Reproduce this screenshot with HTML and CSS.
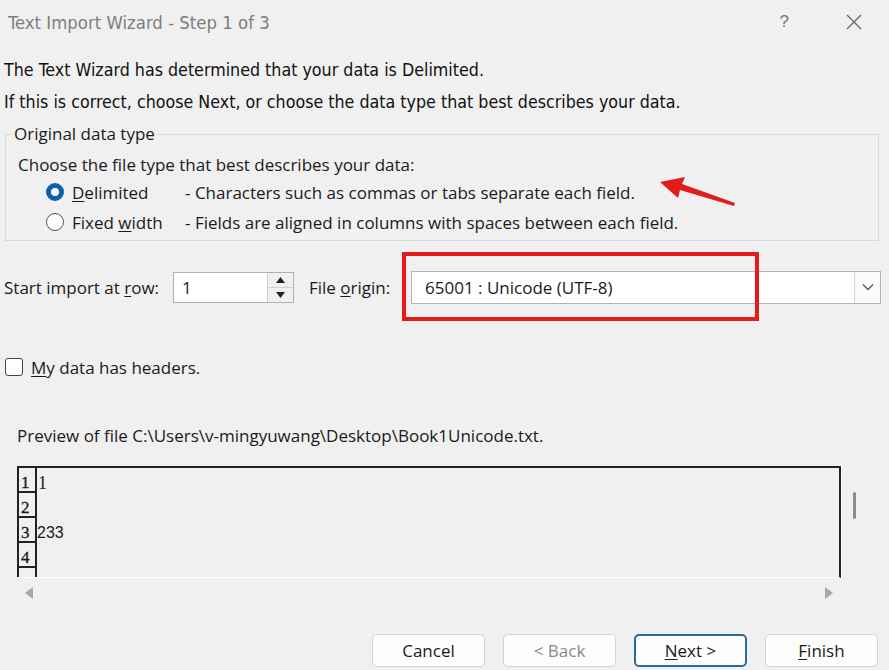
FILE: index.html
```html
<!DOCTYPE html>
<html>
<head>
<meta charset="utf-8">
<title>Text Import Wizard</title>
<link rel="stylesheet" href="styles.css">
</head>
<body>
<div class="dialog">
  <div class="titlebar">
    <span class="title">Text Import Wizard - Step 1 of 3</span>
    <span class="tb-help">?</span>
    <svg class="tb-close" width="16" height="16" viewBox="0 0 16 16"><path d="M1 1 L15 15 M15 1 L1 15" stroke="#666" stroke-width="1.3" fill="none"/></svg>
  </div>

  <div class="intro">
    <div class="intro-line">The Text Wizard has determined that your data is Delimited.</div>
    <div class="intro-line">If this is correct, choose Next, or choose the data type that best describes your data.</div>
  </div>

  <fieldset class="group">
    <legend>Original data type</legend>
    <div class="group-body">
      <div class="choose">Choose the file type that best describes your data:</div>
      <div class="radio-row">
        <span class="radio checked"></span>
        <span class="radio-label"><u>D</u>elimited</span>
        <span class="radio-desc">- Characters such as commas or tabs separate each field.</span>
      </div>
      <div class="radio-row">
        <span class="radio"></span>
        <span class="radio-label">Fixed <u>w</u>idth</span>
        <span class="radio-desc">- Fields are aligned in columns with spaces between each field.</span>
      </div>
    </div>
  </fieldset>

  <div class="import-row">
    <span class="lbl lbl-start">Start import at <u>r</u>ow:</span>
    <div class="spin">
      <span class="spin-val">1</span>
      <div class="spin-btns">
        <span class="spin-btn"><svg width="9" height="6" viewBox="0 0 9 6"><path d="M4.5 0 L9 6 L0 6 Z" fill="#222"/></svg></span>
        <span class="spin-btn"><svg width="9" height="6" viewBox="0 0 9 6"><path d="M0 0 L9 0 L4.5 6 Z" fill="#222"/></svg></span>
      </div>
    </div>
    <span class="lbl lbl-origin">File <u>o</u>rigin:</span>
    <div class="combo">
      <span class="combo-val">65001 : Unicode (UTF-8)</span>
      <span class="combo-btn"><svg width="12" height="8" viewBox="0 0 12 8"><path d="M1 1.5 L6 6.5 L11 1.5" stroke="#555" stroke-width="1.3" fill="none"/></svg></span>
    </div>
  </div>

  <div class="check-row">
    <span class="checkbox"></span>
    <span class="check-label"><u>M</u>y data has headers.</span>
  </div>

  <div class="preview-label">Preview of file C:\Users\v-mingyuwang\Desktop\Book1Unicode.txt.</div>

  <div class="preview-wrap">
    <div class="preview">
      <div class="prow"><span class="pnum">1</span><span class="pdata">1</span></div>
      <div class="prow"><span class="pnum">2</span><span class="pdata"></span></div>
      <div class="prow"><span class="pnum">3</span><span class="pdata sans">233</span></div>
      <div class="prow"><span class="pnum">4</span><span class="pdata"></span></div>
      <div class="prow"><span class="pnum"></span><span class="pdata"></span></div>
    </div>
    <div class="vscroll"><span class="vthumb"></span></div>
  </div>
  <div class="hscroll">
    <svg width="8" height="12" viewBox="0 0 8 12"><path d="M8 0 L8 12 L0 6 Z" fill="#a8a8a8"/></svg>
    <svg width="8" height="12" viewBox="0 0 8 12"><path d="M0 0 L0 12 L8 6 Z" fill="#a8a8a8"/></svg>
  </div>

  <div class="buttons">
    <button class="btn">Cancel</button>
    <button class="btn disabled">&lt; Back</button>
    <button class="btn primary"><u>N</u>ext &gt;</button>
    <button class="btn"><u>F</u>inish</button>
  </div>

  <div class="highlight"></div>
  <svg class="annot-arrow" width="90" height="40" viewBox="0 0 90 40">
    <path d="M5 10 L30 5 L27 12 L80 31 L79 34 L25 18 L23 26 Z" fill="#e31b1b"/>
  </svg>
</div>
</body>
</html>
```

FILE: styles.css
```css
* { box-sizing: border-box; }
html, body {
  margin: 0;
  padding: 0;
  background: #f0f0f0;
}
body {
  font-family: "Open Sans", "Noto Sans", "Liberation Sans", sans-serif;
  color: #1a1a1a;
  font-size: 17px;
}
.dialog {
  position: relative;
  width: 889px;
  height: 670px;
  overflow: hidden;
}
u { text-decoration-thickness: 1px; text-underline-offset: 2px; }

/* title bar */
.titlebar {
  height: 44px;
  display: flex;
  align-items: center;
  padding-left: 8px;
}
.title {
  font-family: "Liberation Sans Narrow", "DejaVu Sans Condensed", "Liberation Sans", sans-serif;
  font-size: 18.4px;
  color: #7d7d7d;
  flex: 1;
}
.tb-help {
  font-family: "Liberation Sans", sans-serif;
  font-size: 17px;
  color: #777;
  margin-right: 57px;
}
.tb-close { margin-right: 27px; }

/* intro */
.intro { margin-top: 10px; padding-left: 4px; }
.intro-line {
  font-family: "Liberation Sans Narrow", "DejaVu Sans Condensed", "Liberation Sans", sans-serif;
  font-size: 17.7px;
  line-height: 32px;
  color: #111;
}

/* group box */
.group {
  margin: 6px 0 0 5px;
  width: 874px;
  padding: 0 0 3px 6px;
  border: 1px solid #d9d9d9;
}
.group legend {
  padding: 0 2px;
  font-size: 17px;
  line-height: 20px;
}
.group-body { padding-left: 6px; }
.choose { margin-top: 9px; line-height: 24px; }
.radio-row {
  height: 30px;
  display: flex;
  align-items: center;
  padding-left: 28px;
}
.radio {
  width: 18px;
  height: 18px;
  border-radius: 50%;
  border: 1px solid #555;
  background: #fff;
  margin-right: 8px;
  flex: none;
}
.radio.checked {
  border: 5px solid #0f5fae;
  background: #fff;
}
.radio-label { width: 113px; }

/* import row */
.import-row {
  margin-top: 30px;
  height: 32px;
  display: flex;
  align-items: center;
  padding-left: 4px;
}
.lbl-start { width: 169px; }
.spin {
  width: 121px;
  height: 31px;
  border: 1px solid #b0b0b0;
  background: #fff;
  display: flex;
  align-items: center;
}
.spin-val { flex: 1; padding-left: 8px; }
.spin-btns {
  width: 26px;
  height: 29px;
  display: flex;
  flex-direction: column;
  border-left: 1px solid #d0d0d0;
  background: #f0f0f0;
}
.spin-btn {
  flex: 1;
  display: flex;
  align-items: center;
  justify-content: center;
}
.spin-btn + .spin-btn { border-top: 1px solid #d0d0d0; }
.lbl-origin { margin-left: 15px; width: 102px; }
.combo {
  width: 470px;
  height: 33px;
  border: 1px solid #b4b4b4;
  background: #fff;
  display: flex;
  align-items: center;
}
.combo-val { flex: 1; padding-left: 13px; }
.combo-btn {
  width: 26px;
  height: 31px;
  border-left: 1px solid #d4d4d4;
  background: #fafafa;
  display: flex;
  align-items: center;
  justify-content: center;
}

/* checkbox */
.check-row {
  margin-top: 52px;
  height: 24px;
  display: flex;
  align-items: center;
  padding-left: 5px;
}
.checkbox {
  width: 18px;
  height: 18px;
  border: 1px solid #444;
  border-radius: 3px;
  background: #fff;
  margin-right: 8px;
}

/* preview */
.preview-label {
  margin-top: 45px;
  padding-left: 17px;
  line-height: 24px;
}
.preview-wrap {
  margin-top: 18px;
  display: flex;
  height: 112px;
}
.preview {
  margin-left: 17px;
  width: 824px;
  height: 112px;
  border-top: 2px solid #222;
  border-right: 2px solid #222;
  border-bottom: 1px solid #fff;
  box-shadow: 1px 0 0 #fff;
  overflow: hidden;
}
.prow {
  display: flex;
  height: 25px;
}
.pnum {
  width: 20px;
  flex: none;
  border-left: 2px solid #222;
  border-right: 2px solid #222;
  border-bottom: 2px solid #222;
  font-family: "Liberation Serif", serif;
  font-size: 17px;
  line-height: 16px;
  padding-left: 2px;
  display: flex;
  align-items: flex-end;
  padding-bottom: 0;
  -webkit-text-stroke: 0.3px #111;
}
.pdata {
  font-family: "Liberation Serif", serif;
  font-size: 18px;
  line-height: 16px;
  padding-top: 7px;
  padding-left: 1px;
}
.pdata.sans {
  font-family: "Liberation Sans", sans-serif;
  font-size: 16px;
  padding-left: 0;
}
.vscroll {
  width: 30px;
  padding-left: 12px;
  padding-top: 26px;
}
.vthumb {
  display: block;
  width: 3px;
  height: 27px;
  border-radius: 2px;
  background: #8c8c8c;
}
.hscroll {
  margin-top: 9px;
  padding-left: 25px;
  width: 833px;
  display: flex;
  justify-content: space-between;
}

/* buttons */
.buttons {
  margin-top: 35px;
  display: flex;
  justify-content: flex-end;
  gap: 18px;
  padding-right: 11px;
}
.btn {
  width: 113px;
  height: 33px;
  border: 1px solid #d2d2d2;
  border-radius: 5px;
  background: #fdfdfd;
  font-family: "Open Sans", "Noto Sans", "Liberation Sans", sans-serif;
  font-size: 17px;
  color: #1a1a1a;
  padding: 0;
}
.btn.disabled { color: #8a8a8a; }
.btn.primary { border: 2px solid #2a6a9a; }

/* annotations */
.highlight {
  position: absolute;
  left: 402px;
  top: 252px;
  width: 357px;
  height: 69px;
  border: 4px solid #e31b1b;
}
.annot-arrow {
  position: absolute;
  left: 655px;
  top: 172px;
}
```
